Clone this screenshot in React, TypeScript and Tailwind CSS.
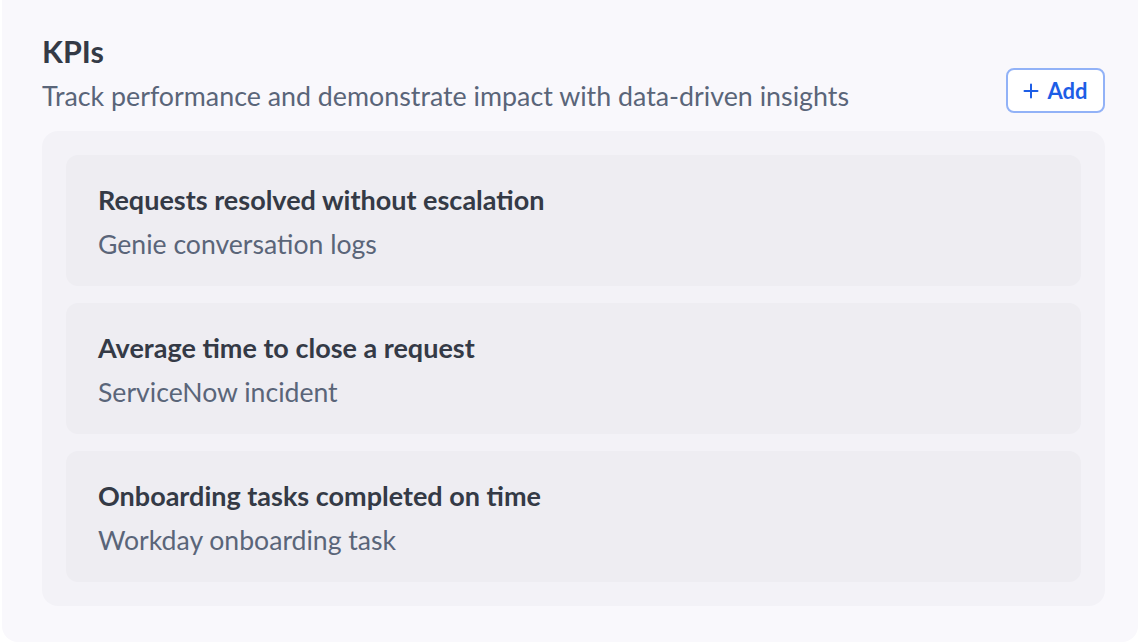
import React from "react";

const items = [
  { title: "Requests resolved without escalation", source: "Genie conversation logs" },
  { title: "Average time to close a request", source: "ServiceNow incident" },
  { title: "Onboarding tasks completed on time", source: "Workday onboarding task" },
];

export default function App() {
  return (
    <div className="w-[1142px] h-[643px] bg-white overflow-hidden" style={{ fontFamily: "Lato, 'Noto Sans', sans-serif" }}>
      <div className="ml-[2px] w-[1136px] h-[642px] rounded-b-[16px] bg-[#f9f8fc] pl-[40px] pr-[33px] pt-[33px] pb-[36px] flex flex-col">
        <div className="flex items-end justify-between">
          <div className="flex flex-col">
            <h1 className="text-[30.5px] leading-[36px] font-bold text-[#343a46]">KPIs</h1>
            <p className="mt-[11px] text-[26.8px] leading-[32px] text-[#5a6579]">
              Track performance and demonstrate impact with data-driven insights
            </p>
          </div>
          <button className="w-[99px] h-[45px] mb-[-1px] flex items-center justify-center gap-[8px] rounded-[8px] border-2 border-[#92b2f7] bg-white text-[#1d5ee6] text-[22px] font-bold">
            <svg width="16" height="16" viewBox="0 0 16 16" className="mt-[1px]">
              <path d="M8 1.5V14.5M1.5 8H14.5" stroke="#1d5ee6" strokeWidth="2" strokeLinecap="round" fill="none" />
            </svg>
            <span className="leading-none">Add</span>
          </button>
        </div>
        <div className="mt-[19px] rounded-[16px] bg-[#f3f2f7] p-[24px] flex flex-col gap-[17px]">
          {items.map((it) => (
            <div key={it.title} className="h-[131px] rounded-[12px] bg-[#eeedf2] px-[32px] pt-[29px] flex flex-col gap-[12px]">
              <div className="text-[27px] leading-[32px] font-bold text-[#343a46]">{it.title}</div>
              <div className="text-[26.6px] leading-[32px] text-[#5a6579]">{it.source}</div>
            </div>
          ))}
        </div>
      </div>
    </div>
  );
}
